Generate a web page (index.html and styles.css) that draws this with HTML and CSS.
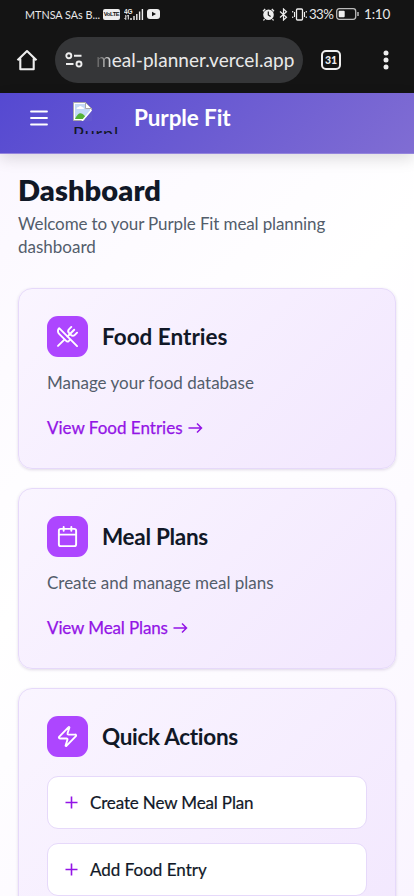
FILE: index.html
```html
<!DOCTYPE html>
<html lang="en">
<head>
<meta charset="utf-8">
<title>Purple Fit</title>
<link rel="stylesheet" href="styles.css">
</head>
<body>
<div class="screen">
  <div class="status">
    <span class="carrier">MTNSA SAs B...</span>
    <span class="volte">VoLTE</span>
    <svg class="signal" width="20" height="13" viewBox="0 0 20 13"><text x="0" y="5.5" font-size="6.5" font-weight="700" fill="#eee">4G</text><path d="M1.8 7v4.5M.5 10l1.3 1.6M4.3 11.5V7M3 8.5 4.3 7" stroke="#eee" fill="none"/><path d="M7 12v-2M10 12V8M12.8 12V6M15.6 12V3.500M18.400 12V1" stroke="#eee" stroke-width="1.4"/></svg>
    <svg class="tube" width="13" height="10" viewBox="0 0 13 10"><rect width="13" height="10" rx="3" fill="#eee"/><path d="m5 2.700 4 2.300-4 2.300z" fill="#141414"/></svg>
    <span class="spacer"></span>
    <svg width="13" height="13" viewBox="0 0 13 13"><circle cx="6.500" cy="6.700" r="5.300" fill="#eee"/><path d="M1 3.200 3.200 1M12 3.200 9.800 1M2.500 11 1.500 12.500M10.500 11l1 1.500" stroke="#eee" stroke-width="1.300"/><path d="M6.300 3.500V7l2.300 1.500" stroke="#141414" stroke-width="1.200" fill="none"/></svg>
    <svg class="bt" width="9" height="13" viewBox="0 0 9 13"><path d="m1 3.500 6.500 5.700-3 2.800V1l3 2.800L1 9.500" stroke="#eee" stroke-width="1.200" fill="none"/></svg>
    <svg class="vib" width="15" height="13" viewBox="0 0 15 13"><rect x="4.500" y="1" width="6" height="11" rx="1" fill="none" stroke="#eee" stroke-width="1.300"/><path d="M2.500 4v5M.7 3v1.500M.7 8.500V10M12.500 4v5M14.300 3v1.500M14.300 8.500V10" stroke="#eee" stroke-width="1.100"/></svg>
    <span class="pct">33%</span>
    <svg class="batt" width="23" height="12" viewBox="0 0 23 12"><rect x=".7" y=".7" width="19" height="10.600" rx="2.500" fill="none" stroke="#bbb" stroke-width="1.300"/><rect x="2.700" y="2.700" width="6" height="6.600" rx="1" fill="#eee"/><path d="M22 4v4" stroke="#bbb" stroke-width="1.500"/></svg>
    <span class="clock">1:10</span>
  </div>
  <div class="browser">
    <svg class="home" width="22" height="22" viewBox="0 0 22 22"><path d="M1.500 11.300 11 2l9.500 9.300M4.300 9.500v10.700h13.400V9.500" fill="none" stroke="#eee" stroke-width="2.100" stroke-linejoin="round"/></svg>
    <div class="urlbar">
      <svg width="18" height="16" viewBox="0 0 18 16" fill="none" stroke="#eee" stroke-width="1.900"><circle cx="3.800" cy="3.800" r="2.500"/><path d="M9 3.800h7.500M1 12h7.500"/><circle cx="14" cy="12" r="2.500"/></svg>
      <span class="url"><span class="faded">m</span>eal-planner.vercel.app</span>
    </div>
    <span class="tabs">31</span>
    <svg class="dots" width="6" height="20" viewBox="0 0 6 20" fill="#eee"><circle cx="3" cy="3" r="2.500"/><circle cx="3" cy="10" r="2.500"/><circle cx="3" cy="17" r="2.500"/></svg>
  </div>
  <header class="appbar">
    <svg class="menu" width="18" height="16" viewBox="0 0 18 16" stroke="#fff" stroke-width="1.800" stroke-linecap="round"><path d="M1 1.500h16M1 8h16M1 14.500h16"/></svg>
    <div class="logo">
      <svg width="19" height="19" viewBox="0 0 19 19"><path d="M.5.5h12l6 6v12H.5z" fill="#fff" stroke="#aaa"/><path d="M2 2h10l5 5v9L2 17z" fill="#c4d9f6"/><path d="M3.500 7q0-2 2-2 2-2 3.500 0 2 0 2 2z" fill="#fff"/><path d="M2 17q4-9 9-4l3 4z" fill="#55b236"/><path d="m10 19 9-11v11z" fill="#6357cf"/><path d="m9 19 9.500-11" stroke="#fff" stroke-width="1.500"/><path d="M12.500.5v6h6z" fill="#fff" stroke="#aaa"/></svg>
      <span class="alt">Purpl</span>
    </div>
    <span class="brand">Purple Fit</span>
  </header>
  <main class="page">
    <h1>Dashboard</h1>
    <p class="intro"><span class="l1">Welcome to your Purple Fit meal planning</span><br>dashboard</p>
    <section class="card">
      <div class="head">
        <span class="tile"><svg viewBox="0 0 24 24"><path d="m16 2-2.300 2.300a3 3 0 0 0 0 4.200l1.800 1.800a3 3 0 0 0 4.200 0L22 8"/><path d="M15 15 3.300 3.300a4.200 4.200 0 0 0 0 6l7.300 7.300c.7.700 2 .7 2.800 0L15 15Zm0 0 7 7"/><path d="m2.100 21.800 6.400-6.300M19 5l-7 7"/></svg></span>
        <h2 class="t-food">Food Entries</h2>
      </div>
      <p class="desc d-food">Manage your food database</p>
      <a class="link k-food">View Food Entries <svg class="arrow" viewBox="0 0 15 12"><path d="M.5 6h13M9 1.500 13.500 6 9 10.500"/></svg></a>
    </section>
    <section class="card">
      <div class="head">
        <span class="tile"><svg viewBox="0 0 24 24"><path d="M8 2v4M16 2v4M3 10h18"/><rect x="3" y="4" width="18" height="18" rx="2"/></svg></span>
        <h2 class="t-meal">Meal Plans</h2>
      </div>
      <p class="desc d-meal">Create and manage meal plans</p>
      <a class="link k-meal">View Meal Plans <svg class="arrow" viewBox="0 0 15 12"><path d="M.5 6h13M9 1.500 13.500 6 9 10.500"/></svg></a>
    </section>
    <section class="card quick">
      <div class="head">
        <span class="tile"><svg viewBox="0 0 24 24"><path d="M4 14a1 1 0 0 1-.78-1.630l9.900-10.200a.5.5 0 0 1 .86.460l-1.920 6.020A1 1 0 0 0 13 10h7a1 1 0 0 1 .78 1.630l-9.900 10.200a.5.5 0 0 1-.86-.460l1.920-6.020A1 1 0 0 0 11 14z"/></svg></span>
        <h2 class="t-quick">Quick Actions</h2>
      </div>
      <div class="action"><svg class="plus" viewBox="0 0 13 13"><path d="M.5 6.500h12M6.500.5v12"/></svg><span class="a-create">Create New Meal Plan</span></div>
      <div class="action"><svg class="plus" viewBox="0 0 13 13"><path d="M.5 6.500h12M6.500.5v12"/></svg><span class="a-add">Add Food Entry</span></div>
    </section>
  </main>
</div>
</body>
</html>
```
FILE: styles.css
```css
* { box-sizing: border-box; }
body { margin: 0; font-family: Lato, "Liberation Sans", sans-serif; font-variant-ligatures: none; }
h1, h2, p { margin: 0; }
svg { display: block; flex: none; }
.screen { height: 896px; overflow: hidden; background: linear-gradient(135deg, #faf5ff 0%, #fff 48%, #faf5ff 100%); white-space: nowrap; }
.status { height: 28px; background: #141414; color: #e8e8e8; display: flex; align-items: center; padding: 0 25px 0 25px; }
.carrier { font-size: 10.800px; width: 77px; letter-spacing: 0; }
.volte { width: 17px; height: 11px; background: #eee; color: #141414; font: 700 5.800px/11px "Liberation Sans", sans-serif; border-radius: 2px; text-align: center; letter-spacing: -.4px; margin-left: 1px; }
.signal { margin-left: 4px; font-family: "Liberation Sans", sans-serif; }
.tube { margin-left: 3px; }
.spacer { flex: 1; }
.bt { margin-left: 4px; }
.vib { margin-left: 4px; }
.pct { font-size: 13.300px; margin-left: 2px; width: 27px; letter-spacing: -.6px; }
.batt { margin-left: 0; }
.clock { font-size: 13.500px; margin-left: 5px; width: 25px; letter-spacing: -.2px; }
.browser { height: 65px; background: #141414; display: flex; align-items: center; padding: 0 25px 1px 16px; }
.home { width: 22px; }
.urlbar { margin-left: 17px; width: 248px; height: 46px; border-radius: 23px; background: #353638; display: flex; align-items: center; padding-left: 10px; color: #e9e9e9; }
.url { margin-left: 13px; font-size: 19px; letter-spacing: .05px; line-height: 24px; }
.faded { background: linear-gradient(90deg, #555, #e5e5e5); background-clip: text; color: transparent; }
.tabs { margin-left: 18px; width: 20px; height: 20px; border: 2px solid #eee; border-radius: 5px; color: #eee; font-size: 10.500px; font-weight: 900; line-height: 16px; text-align: center; }
.dots { margin-left: auto; }
.appbar { height: 60.500px; background: linear-gradient(135deg, #5549d1, #806dd3); border-bottom: 1px solid #9585dd; box-shadow: 0 5px 14px rgba(0,0,0,.13); display: flex; align-items: flex-start; padding: 8px 0 0 30px; position: relative; }
.menu { margin-top: 9px; }
.logo { margin-left: 25px; width: 47px; height: 33px; padding-top: 1px; overflow: hidden; }
.alt { display: block; font-size: 18px; line-height: 24px; color: #111827; letter-spacing: .9px; }
.brand { margin-left: 14px; margin-top: 3px; font-size: 22.500px; line-height: 28px; font-weight: 700; color: #fff; letter-spacing: -.1px; }
.page { padding: 18.500px 18.500px 0 18px; }
h1 { font-size: 29px; line-height: 36px; font-weight: 800; color: #111827; letter-spacing: .1px; }
.intro { margin-top: 4px; font-size: 17px; line-height: 23px; color: #535d6b; margin-bottom: 30px; }
.l1 { letter-spacing: -.12px; }
.card { height: 181px; margin-bottom: 19px; border: 1.500px solid #e6d9fa; border-radius: 14px; background: linear-gradient(135deg, #faf5ff, #f2e7fe); box-shadow: 0 1px 3px rgba(60,30,100,.16); padding: 27px 28px; }
.quick { height: 280px; }
.head { display: flex; align-items: center; gap: 14px; }
.tile { width: 41px; height: 41px; border-radius: 11px; background: #ad46ff; display: grid; place-items: center; }
.tile svg { width: 23px; height: 23px; fill: none; stroke: #fff; stroke-width: 2; stroke-linecap: round; stroke-linejoin: round; }
h2 { font-size: 22.500px; line-height: 32px; padding-top: 1px; font-weight: 700; color: #111827; }
.t-meal { letter-spacing: -.3px; }
.t-quick { letter-spacing: -.3px; }
.desc { margin-top: 14px; font-size: 17px; line-height: 23px; color: #535d6b; }
.link { margin-top: 22px; font-size: 17px; line-height: 23px; color: #9314e6; -webkit-text-stroke: .25px #9314e6; display: flex; align-items: center; gap: 5px; }
.k-meal { letter-spacing: -.12px; }
.arrow { width: 15px; height: 12px; fill: none; stroke: #9314e6; stroke-width: 1.500; }
.action { height: 53px; margin-top: 19px; border: 1px solid #e6d9fa; border-radius: 11px; background: #fff; display: flex; align-items: center; padding-left: 17px; gap: 12px; font-size: 17px; color: #111827; -webkit-text-stroke: .2px #111827; }
.a-create { letter-spacing: -.14px; }
.action + .action { margin-top: 14px; }
.plus { width: 13px; height: 13px; fill: none; stroke: #9314e6; stroke-width: 1.600; }
```
